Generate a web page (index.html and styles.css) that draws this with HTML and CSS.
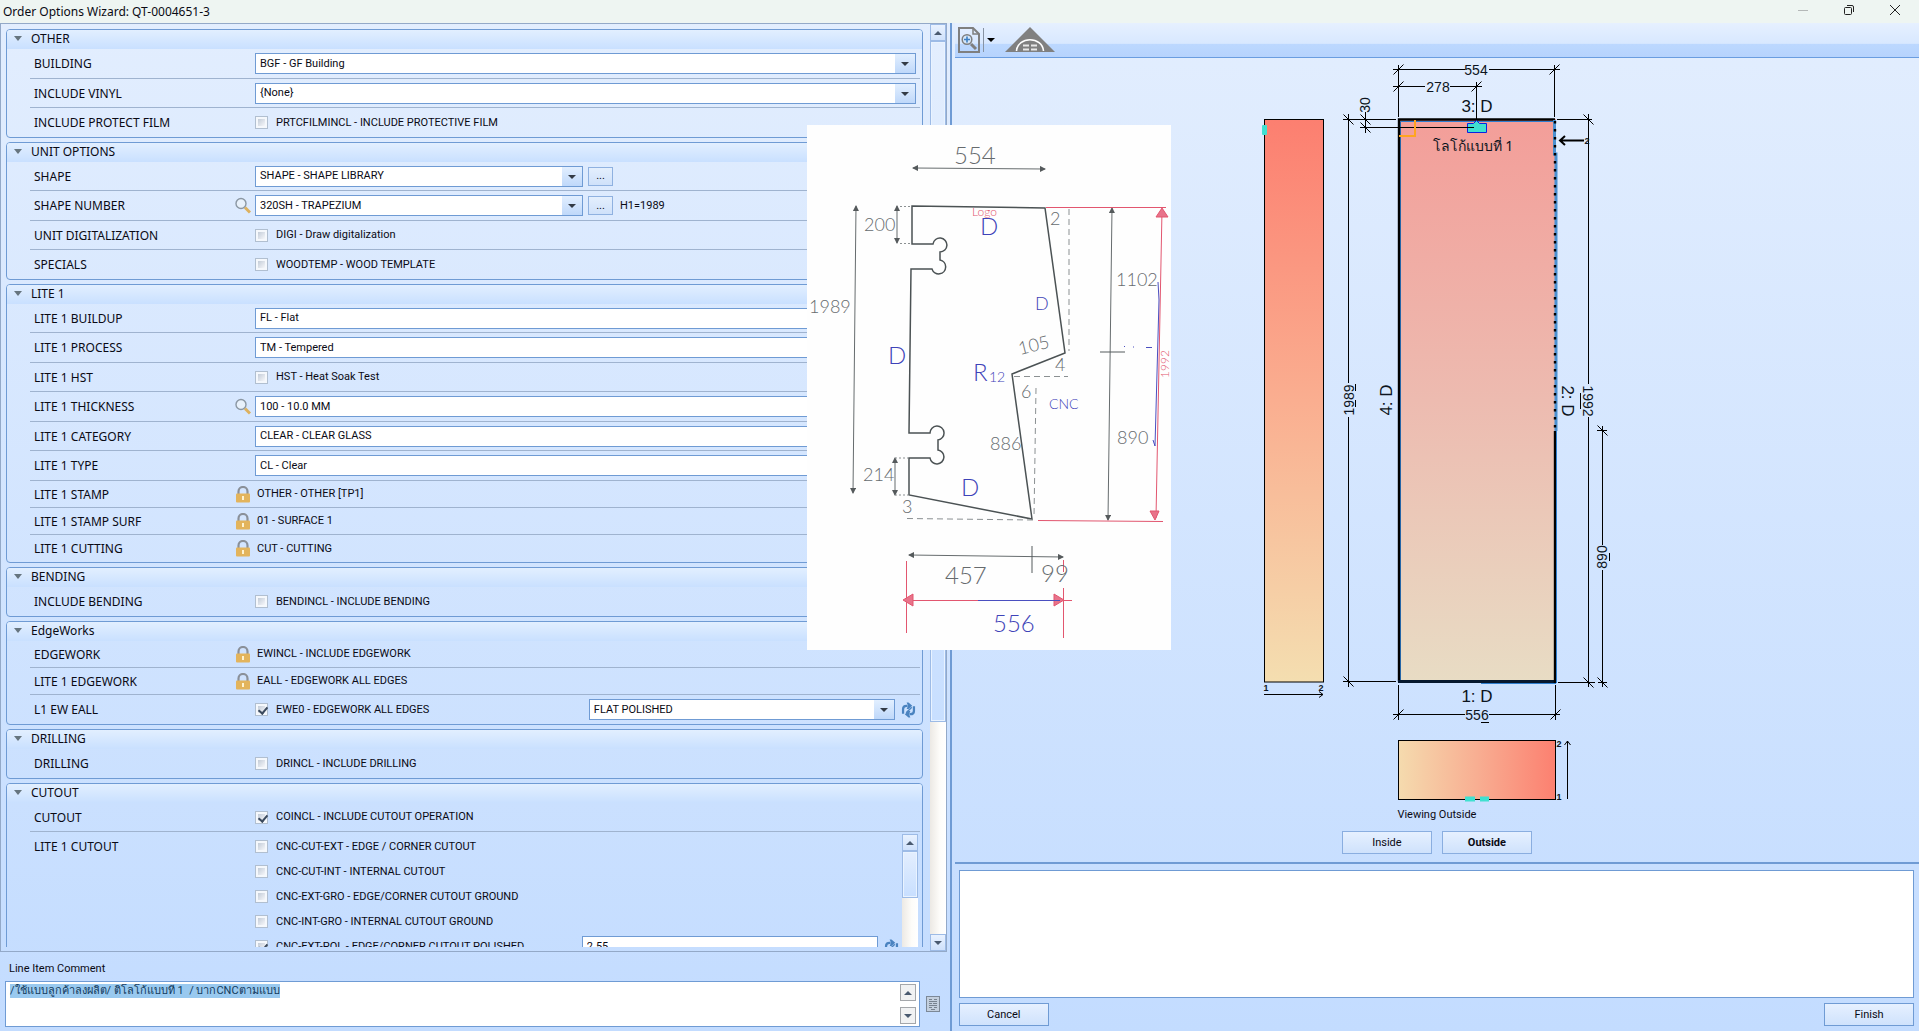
FILE: index.html
```html
<!DOCTYPE html>
<html lang="en">
<head>
  <meta charset="UTF-8">
  <meta name="viewport" content="width=device-width, initial-scale=1.0">
  <title>Order Options Wizard: QT-0004651-3</title>
  <link rel="stylesheet" href="styles.css">
</head>
<body>
  <!-- shared icons -->
  <svg class="defs" aria-hidden="true">
    <symbol id="lock" viewBox="0 0 14 17">
      <path d="M2.500 8V5.500a4.500 4.500 0 0 1 9 0V8" fill="none" stroke="#8a9099" stroke-width="2.200"/>
      <rect x="0" y="7.500" width="14" height="9" rx="1" fill="#e3b45c"/>
      <path d="M6 10h2v4H6z" fill="#fff3d0"/>
    </symbol>
    <symbol id="search" viewBox="0 0 16 16">
      <circle cx="6" cy="6" r="5" fill="#e8f1fb" stroke="#8b97a3" stroke-width="1.400"/>
      <path d="M10 10l5 5" stroke="#ddb15e" stroke-width="3"/>
    </symbol>
    <symbol id="refresh" viewBox="0 0 16 16">
      <path d="M2.200 12V7Q2.200 3.500 6 3.500H7M13.800 4V9Q13.800 12.500 10 12.500H9" fill="none" stroke="#4a83c0" stroke-width="2.400"/>
      <path d="M6 0h2l4 3.500L8 7H6l1.500-3.500zM10 9H8l-4 3.500L8 16h2l-1.500-3.500z" fill="#4a83c0"/>
      <path d="M5.500 11l6-6" stroke="#4a83c0" stroke-width="1.500"/>
    </symbol>
  </svg>

  <header class="titlebar">
    <h1>Order Options Wizard: QT-0004651-3</h1>
    <div class="window-buttons">
      <button aria-label="Minimize"><svg width="12" height="12"><path d="M1 6.500h10" stroke="#b4b8b8"/></svg></button>
      <button aria-label="Restore"><svg width="12" height="12" fill="none" stroke="#222"><rect x="1.500" y="3.500" width="7" height="7" rx="1"/><path d="M4 1.500h5q1.500 0 1.500 1.500v5"/></svg></button>
      <button aria-label="Close"><svg width="12" height="12"><path d="M1 1l10 10M11 1L1 11" stroke="#222"/></svg></button>
    </div>
  </header>

  <main class="wizard">
    <section class="left">
      <div class="options">
        <div class="groups">

          <section class="group">
            <h2>OTHER</h2>
            <div class="row tall">
              <label for="building">BUILDING</label>
              <div class="value"><span class="combo"><select id="building"><option>BGF - GF Building</option></select></span></div>
            </div>
            <div class="row">
              <label for="vinyl">INCLUDE VINYL</label>
              <div class="value"><span class="combo"><select id="vinyl"><option>{None}</option></select></span></div>
            </div>
            <div class="row">
              <span class="name">INCLUDE PROTECT FILM</span>
              <div class="value"><label class="check"><input type="checkbox">PRTCFILMINCL - INCLUDE PROTECTIVE FILM</label></div>
            </div>
          </section>

          <section class="group">
            <h2>UNIT OPTIONS</h2>
            <div class="row">
              <label for="shape">SHAPE</label>
              <div class="value"><span class="combo half"><select id="shape"><option>SHAPE - SHAPE LIBRARY</option></select></span><button class="more" aria-label="Browse shape">...</button></div>
            </div>
            <div class="row tall">
              <label for="shape-number">SHAPE NUMBER</label>
              <svg class="icon"><use href="#search"/></svg>
              <div class="value"><span class="combo half"><select id="shape-number"><option>320SH - TRAPEZIUM</option></select></span><button class="more" aria-label="Browse shape number">...</button><span class="note">H1=1989</span></div>
            </div>
            <div class="row">
              <span class="name">UNIT DIGITALIZATION</span>
              <div class="value"><label class="check"><input type="checkbox">DIGI - Draw digitalization</label></div>
            </div>
            <div class="row">
              <span class="name">SPECIALS</span>
              <div class="value"><label class="check"><input type="checkbox">WOODTEMP - WOOD TEMPLATE</label></div>
            </div>
          </section>

          <section class="group">
            <h2>LITE 1</h2>
            <div class="row">
              <label for="buildup">LITE 1 BUILDUP</label>
              <div class="value"><span class="combo"><select id="buildup"><option>FL - Flat</option></select></span></div>
            </div>
            <div class="row tall">
              <label for="process">LITE 1 PROCESS</label>
              <div class="value"><span class="combo"><select id="process"><option>TM - Tempered</option></select></span></div>
            </div>
            <div class="row">
              <span class="name">LITE 1 HST</span>
              <div class="value"><label class="check"><input type="checkbox">HST - Heat Soak Test</label></div>
            </div>
            <div class="row tall">
              <label for="thickness">LITE 1 THICKNESS</label>
              <svg class="icon"><use href="#search"/></svg>
              <div class="value"><span class="combo"><select id="thickness"><option>100 - 10.0 MM</option></select></span></div>
            </div>
            <div class="row">
              <label for="category">LITE 1 CATEGORY</label>
              <div class="value"><span class="combo"><select id="category"><option>CLEAR - CLEAR GLASS</option></select></span></div>
            </div>
            <div class="row tall">
              <label for="type">LITE 1 TYPE</label>
              <div class="value"><span class="combo"><select id="type"><option>CL - Clear</option></select></span></div>
            </div>
            <div class="row locked">
              <span class="name">LITE 1 STAMP</span>
              <svg class="icon"><use href="#lock"/></svg>
              <div class="value">OTHER - OTHER [TP1]</div>
            </div>
            <div class="row locked">
              <span class="name">LITE 1 STAMP SURF</span>
              <svg class="icon"><use href="#lock"/></svg>
              <div class="value">01 - SURFACE 1</div>
            </div>
            <div class="row locked">
              <span class="name">LITE 1 CUTTING</span>
              <svg class="icon"><use href="#lock"/></svg>
              <div class="value">CUT - CUTTING</div>
            </div>
          </section>

          <section class="group">
            <h2>BENDING</h2>
            <div class="row">
              <span class="name">INCLUDE BENDING</span>
              <div class="value"><label class="check"><input type="checkbox">BENDINCL - INCLUDE BENDING</label></div>
            </div>
          </section>

          <section class="group">
            <h2>EdgeWorks</h2>
            <div class="row locked">
              <span class="name">EDGEWORK</span>
              <svg class="icon"><use href="#lock"/></svg>
              <div class="value">EWINCL - INCLUDE EDGEWORK</div>
            </div>
            <div class="row locked">
              <span class="name">LITE 1 EDGEWORK</span>
              <svg class="icon"><use href="#lock"/></svg>
              <div class="value">EALL - EDGEWORK ALL EDGES</div>
            </div>
            <div class="row">
              <span class="name">L1 EW EALL</span>
              <div class="value">
                <label class="check"><input type="checkbox" checked>EWE0 - EDGEWORK ALL EDGES</label>
                <span class="combo edge"><select aria-label="Edge finish"><option>FLAT POLISHED</option></select></span>
                <button class="refresh" aria-label="Refresh edge finish"><svg class="icon"><use href="#refresh"/></svg></button>
              </div>
            </div>
          </section>

          <section class="group">
            <h2>DRILLING</h2>
            <div class="row">
              <span class="name">DRILLING</span>
              <div class="value"><label class="check"><input type="checkbox">DRINCL - INCLUDE DRILLING</label></div>
            </div>
          </section>

          <section class="group">
            <h2>CUTOUT</h2>
            <div class="row">
              <span class="name">CUTOUT</span>
              <div class="value"><label class="check"><input type="checkbox" checked>COINCL - INCLUDE CUTOUT OPERATION</label></div>
            </div>
            <div class="row list">
              <span class="name">LITE 1 CUTOUT</span>
              <div class="cutouts">
                <label class="check"><input type="checkbox">CNC-CUT-EXT - EDGE / CORNER CUTOUT</label>
                <label class="check"><input type="checkbox">CNC-CUT-INT - INTERNAL CUTOUT</label>
                <label class="check"><input type="checkbox">CNC-EXT-GRO - EDGE/CORNER CUTOUT GROUND</label>
                <label class="check"><input type="checkbox">CNC-INT-GRO - INTERNAL CUTOUT GROUND</label>
                <div class="cutout">
                  <label class="check"><input type="checkbox" checked>CNC-EXT-POL - EDGE/CORNER CUTOUT POLISHED</label>
                  <input class="amount" type="text" value="2.55" aria-label="Polished cutout length">
                  <button class="refresh" aria-label="Refresh cutout length"><svg class="icon"><use href="#refresh"/></svg></button>
                </div>
              </div>
              <div class="scrollbar">
                <button class="arrow up" aria-label="Scroll cutouts up"></button>
                <span class="thumb short"></span>
              </div>
            </div>
          </section>

        </div>
        <div class="scrollbar">
          <button class="arrow up" aria-label="Scroll up"></button>
          <span class="thumb"></span>
          <span class="track"></span>
          <button class="arrow down" aria-label="Scroll down"></button>
        </div>
      </div>

      <div class="comment">
        <label for="comment">Line Item Comment</label>
        <div class="comment-row">
          <div class="comment-box">
            <textarea id="comment" spellcheck="false">/ใช้แบบลูกค้าลงผลิต/ ติโลโก้แบบที่ 1  / บากCNCตามแบบ</textarea>
            <div class="spin">
              <button class="arrow up grey" aria-label="Previous line"></button>
              <button class="arrow down grey" aria-label="Next line"></button>
            </div>
          </div>
          <button class="notes" aria-label="Comment templates">
            <svg width="14" height="16"><rect x=".5" y=".5" width="13" height="15" fill="#c3cfde" stroke="#7c8897"/><path d="M3 3.500h3M8 3.500h3M3 5.500h8M3 7.500h3M7 7.500h4M3 9.500h8M3 11.500h3M8 11.500h3M5 13.500h4" stroke="#77828f"/></svg>
          </button>
        </div>
      </div>
    </section>

    <section class="right">
      <div class="toolbar">
        <button aria-label="Zoom page">
          <svg width="22" height="26" fill="none" stroke="#7f7f7f"><path d="M1 1h14l6 6v18H1z" stroke-width="2"/><path d="M15 1v6h6" stroke-width="1.500"/><circle cx="9" cy="12.500" r="4.800" fill="#d6e8fb" stroke-width="1.500"/><path d="M9 9.500v6M6 12.500h6" stroke="#3d7fc4" stroke-width="1.600"/><path d="M13 17l5 5" stroke-width="3"/></svg>
        </button>
        <button class="drop" aria-label="Zoom options"></button>
        <button aria-label="Shape view">
          <svg width="50" height="26"><path d="M25 0l25 25H0z" fill="#808080"/><path d="M11.500 24c1-15 26-15 27 0" fill="none" stroke="#fff" stroke-width="1.600"/><path d="M18 18.500h6M26 18.500h6M18 22.500h6M26 22.500h6" stroke="#e8e8e8" stroke-width="1.800"/></svg>
        </button>
      </div>

      <div class="stage">
        <!-- glass elevation with front, side and bottom views -->
        <svg class="drawing" viewBox="1246 62 380 742" width="380" height="742">
          <defs>
            <linearGradient id="side" x1="0" y1="0" x2="0" y2="1"><stop offset="0" stop-color="#fc7f70"/><stop offset=".5" stop-color="#faae90"/><stop offset="1" stop-color="#f4deb0"/></linearGradient>
            <linearGradient id="front" x1="0" y1="0" x2="0" y2="1"><stop offset="0" stop-color="#f39e99"/><stop offset=".5" stop-color="#edbbb0"/><stop offset="1" stop-color="#e8dcc4"/></linearGradient>
            <linearGradient id="bottom"><stop offset="0" stop-color="#f5dbae"/><stop offset=".5" stop-color="#f8ae92"/><stop offset="1" stop-color="#fc8070"/></linearGradient>
          </defs>

          <rect x="1263.500" y="119.500" width="59" height="562.500" fill="url(#side)" stroke="#000"/>
          <rect x="1261" y="125" width="5" height="10" rx="1" fill="#40e0d0"/>
          <g class="dim"><path d="M1263 694.500h59m-4-3l4 3l-4 3"/></g>
          <text class="tiny" x="1265" y="691">1</text>
          <text class="tiny" x="1320" y="691">2</text>

          <rect x="1397" y="119" width="158" height="563" fill="url(#front)"/>
          <path d="M1399.500 681V121.500H1554" fill="none" stroke="#2f7fd0"/>
          <path d="M1398 681.500V119.500H1554" fill="none" stroke="#000" stroke-width="2.400"/>
          <path d="M1397 681.500H1555" stroke="#06182e" stroke-width="3"/>
          <path d="M1553.500 120v34h1.500v277" fill="none" stroke="#4a90d0" stroke-width="3"/>
          <path d="M1554 121v310" stroke="#000" stroke-width="2.400" stroke-dasharray="2.400 5.600"/>
          <path d="M1554 431v252" stroke="#000" stroke-width="2.400"/>
          <path d="M1555.500 431v252M1480 683.500h75" stroke="#2f7fd0"/>

          <g class="dim">
            <path d="M1397.500 65v52M1553.500 65v52M1392 69.500h72M1488 69.500h71M1392 86.500h32M1449 86.500h32M1475.500 82v42"/>
            <path d="M1392.500 74.500l10-10M1548.500 74.500l10-10M1392.500 91.500l10-10M1470.500 91.500l10-10"/>
            <path d="M1364.500 112v21M1359 127.500h114M1342 119.500h53M1342 681.500h53M1347.500 114v269M1347.500 417v270"/>
            <path d="M1359.500 114.500l10 10M1359.500 122.500l10 10M1342.500 114.500l10 10M1342.500 676.500l10 10"/>
            <path d="M1556 119.500h35M1557 682.500h37M1597 682.500h9M1587.500 114v270M1587.500 417v270M1601.500 426v119M1601.500 570v117M1596 430.500h10"/>
            <path d="M1582.500 114.500l10 10M1582.500 677.500l10 10M1596.500 425.500l10 10M1596.500 677.500l10 10"/>
            <path d="M1397.500 685v35M1554.500 685v35M1392 714.500h72M1488 714.500h71M1392.500 719.500l10-10M1549.500 719.500l10-10M1480 722.500h8"/>
            <path d="M1354.500 384v7M1354.500 400v7M1579.500 393v16M1608.500 553v8"/>
          </g>
          <path d="M1564 136l-5 4.500l5 4.500M1559 140.500h24" fill="none" stroke="#000" stroke-width="2"/>
          <text class="tiny" x="1586" y="144">2</text>

          <path d="M1414 120v16h-16" fill="none" stroke="#ffa51f" stroke-width="2"/>
          <path d="M1466.500 123.500h6l3-3l3 3h7v9h-19z" fill="#40e0d0" stroke="#0a22e0"/>
          <path d="M1466 127.500h7" stroke="#000"/>

          <text class="size" x="1475" y="75">554</text>
          <text class="size" x="1437" y="92">278</text>
          <text class="size" x="1476" y="720">556</text>
          <text class="size" transform="translate(1369 105) rotate(-90)">30</text>
          <text class="size" transform="translate(1353 400) rotate(-90)">1989</text>
          <text class="size" transform="translate(1582 401) rotate(90)">1992</text>
          <text class="size" transform="translate(1606 557) rotate(-90)">890</text>
          <text class="edge-name" x="1476" y="112">3: D</text>
          <text class="edge-name" x="1476" y="702">1: D</text>
          <text class="edge-name" transform="translate(1391 400) rotate(-90)">4: D</text>
          <text class="edge-name" transform="translate(1561 401) rotate(90)">2: D</text>
          <text class="logo" x="1472" y="151">โลโก้แบบที่ 1</text>

          <rect x="1397.500" y="740.500" width="157" height="59" fill="url(#bottom)" stroke="#000"/>
          <path d="M1464 796.500h10v5h-10zM1479 796.500h9v5h-9z" fill="#40e0d0"/>
          <g class="dim"><path d="M1566.500 799v-58m-3 4l3-4l3 4"/></g>
          <text class="tiny" x="1558" y="747">2</text>
          <text class="tiny" x="1558" y="800">1</text>
        </svg>
        <p>Viewing Outside</p>
        <div class="sides">
          <button class="btn">Inside</button>
          <button class="btn active">Outside</button>
        </div>
      </div>

      <div class="bottom">
        <textarea aria-label="Messages" readonly></textarea>
        <div class="actions">
          <button class="btn">Cancel</button>
          <button class="btn">Finish</button>
        </div>
      </div>
    </section>
  </main>

  <!-- scanned customer sketch, floats above the wizard -->
  <svg class="sketch" viewBox="807 125 364 525">
    <defs>
      <marker id="tip" viewBox="0 0 6 6" refX="5" refY="3" markerWidth="6" markerHeight="6" markerUnits="userSpaceOnUse" orient="auto-start-reverse"><path class="tip" d="M0 0l6 3l-6 3z"/></marker>
    </defs>
    <g class="outline">
      <path d="M912 206L1045 208L1065 353L1012 374L1032 519L909 495V458H930A7 7 0 1 0 938 450V440A7 7 0 1 0 930 433H909L911 269H932A7 7 0 1 0 940 260V252A7 7 0 1 0 933 244H912Z"/>
    </g>
    <g class="arrows">
      <path d="M913 168L1045 169"/>
      <path d="M856 206L853 493"/>
      <path d="M897 206V243"/>
      <path d="M895 458V495"/>
      <path d="M1112 208L1108 520"/>
      <path d="M909 555L1063 557"/>
    </g>
    <path class="pencil" d="M1032 546v27M1100 352h25"/>
    <path class="dashes" d="M1069 209V351M1014 376.500H1068M1036 388L1034 518M907 518.500L1033 520"/>
    <path class="dots" d="M900 206.500h12M900 243.500h12M895 458h13M895 495h13"/>
    <g class="red">
      <path d="M1046 207.500H1166M1162 210L1156 518M1038 520.500L1163 521.500M906.500 561V633M1063.500 560v12M1063.500 588V638M905 600.500H1072"/>
      <path class="fill" d="M1162 208l-6 9h12zM1155 520l-5-9h9zM903 600l10-6v12zM1064 600l-10-6v12z"/>
    </g>
    <path class="pen" d="M1158 282L1159 300L1155 446L1153 440M978 600.500h82M1146 347.500h6M1124 346.500h1M1133 347h1"/>
    <g class="note-grey">
      <text x="954" y="164">554</text>
      <text class="mid" x="864" y="231">200</text>
      <text class="mid" x="809" y="313">1989</text>
      <text class="mid" x="1050" y="225">2</text>
      <text class="mid" x="1116" y="286">1102</text>
      <text class="mid" transform="translate(1020 355) rotate(-14)">105</text>
      <text class="mid" x="1055" y="371">4</text>
      <text class="mid" x="1021" y="398">6</text>
      <text class="mid" x="990" y="450">886</text>
      <text class="mid" x="1117" y="444">890</text>
      <text class="mid" x="863" y="481">214</text>
      <text class="mid" x="902" y="513">3</text>
      <text x="945" y="584">457</text>
      <text x="1041" y="582">99</text>
    </g>
    <g class="note-blue">
      <text x="980" y="235">D</text>
      <text class="mid" x="1035" y="310">D</text>
      <text x="888" y="364">D</text>
      <text x="961" y="496">D</text>
      <text x="973" y="381">R</text>
      <text class="small" x="989" y="382">12</text>
      <text class="small" x="1049" y="409">CNC</text>
      <text x="993" y="632">556</text>
    </g>
    <g class="note-red">
      <text x="972" y="216">Logo</text>
      <text class="small" transform="translate(1169 378) rotate(-90)">1992</text>
    </g>
  </svg>

  <script>
    const comment = document.getElementById("comment");
    comment.focus();
    comment.select();
  </script>
</body>
</html>
```

FILE: styles.css
```css
* { box-sizing: border-box; }
body {
  --line: #6f9bd4;
  --soft-line: #9fb3cf;
  margin: 0;
  height: 100vh;
  display: flex;
  flex-direction: column;
  overflow: hidden;
  position: relative;
  font: 11px/14px Roboto, "Noto Sans", sans-serif;
  color: #0a0a14;
  background: linear-gradient(#e3eefe, #c3dcff);
}
h1, h2, p { margin: 0; font-weight: normal; }
button {
  padding: 0;
  border: 0;
  background: none;
  font: inherit;
  color: inherit;
}
input, select, textarea { margin: 0; font: inherit; color: inherit; }
.defs { position: absolute; width: 0; height: 0; }

/* title bar */
.titlebar {
  flex: none;
  height: 23px;
  display: flex;
  justify-content: space-between;
  align-items: center;
  padding: 0 18px 3px 3px;
  background: #eef5f2;
}
.titlebar h1 { font: 12px/20px "Noto Sans", sans-serif; padding-top: 3px; }
.window-buttons { display: flex; gap: 34px; }
.window-buttons svg { display: block; }

.wizard { flex: 1; min-height: 0; display: flex; }
.left {
  width: 49.6%;
  display: flex;
  flex-direction: column;
  border-right: 2px solid var(--line);
}
.right { flex: 1; min-width: 0; display: flex; flex-direction: column; padding-left: 3px; }

/* option groups */
.options {
  flex: 1;
  min-height: 0;
  display: flex;
  margin-right: 3px;
  border: 1px solid #93a9c8;
}
.groups { flex: 1; overflow: hidden; margin: 5px 7px 4px 5px; }
.group {
  margin-bottom: 4px;
  border: 1px solid var(--line);
  border-radius: 4px;
}
.group h2 {
  height: 19px;
  display: flex;
  align-items: center;
  gap: 9px;
  padding: 0 0 2px 7px;
  font: 12px/17px "Noto Sans", sans-serif;
  background: linear-gradient(#e2efff, #c9e0ff);
  border-radius: 3px 3px 0 0;
}
.group h2::before {
  content: "";
  border: 4px solid transparent;
  border-top: 5px solid #66757f;
  border-bottom: 0;
}
.row {
  height: 29px;
  display: grid;
  grid-template-columns: 201px 20px 1fr;
  align-items: center;
  margin: 0 2px 0 23px;
  padding-left: 4px;
  border-bottom: 1px solid var(--soft-line);
}
.row:last-child { border-bottom: 0; }
.row.tall { height: 30px; }
.row.locked { height: 27px; }
.row > label, .name { font: 12px/17px "Noto Sans", sans-serif; }
.icon { width: 16px; height: 17px; display: block; }
.value { grid-column: 3; display: flex; align-items: center; padding-right: 4px; }
.locked .value { padding-left: 2px; }
.combo {
  flex: 1;
  display: flex;
  position: relative;
  height: 21px;
  border: 1px solid var(--line);
  background: #fff;
}
.combo.half { flex: none; width: 328px; }
.combo.edge { flex: none; width: 306px; margin-left: auto; }
.combo select {
  flex: 1;
  appearance: none;
  border: 0;
  padding: 0 22px 0 4px;
  background: linear-gradient(#e2efff, #bfd8fa) right / 20px 100% no-repeat;
}
.combo::after {
  content: "";
  position: absolute;
  right: 6px;
  top: 8px;
  border: 4px solid transparent;
  border-top-color: #333b46;
  border-bottom: 0;
}
.more {
  width: 25px;
  height: 19px;
  margin-left: 5px;
  border: 1px solid #8fb1e0;
  background: linear-gradient(#e4effd, #cfe1fa);
}
.note { margin-left: 7px; }
.check { display: flex; align-items: center; gap: 8px; white-space: nowrap; }
.check input {
  appearance: none;
  width: 13px;
  height: 13px;
  border: 1px solid #b1bfd0;
  background: linear-gradient(135deg, #c3ccd8, #f6f7fa) content-box, #f5f8fc;
  padding: 2px;
}
.check input:checked::before {
  content: "";
  display: block;
  width: 4px;
  height: 7px;
  margin: -1px 0 0 2px;
  border: solid #3b4a5e;
  border-width: 0 2px 2px 0;
  transform: rotate(40deg);
}
.refresh { margin-left: 6px; }
.refresh .icon { width: 15px; height: 16px; }

.row.list {
  height: 200px;
  grid-template-columns: 221px 1fr 16px;
  align-items: start;
  padding-right: 2px;
}
.list .name { padding-top: 6px; }
.cutouts { padding-top: 2px; }
.cutouts > * { height: 25px; }
.cutout { display: flex; align-items: center; padding-right: 3px; }
.amount {
  width: 296px;
  height: 21px;
  margin-left: auto;
  padding: 0 4px;
  border: 1px solid var(--line);
  background: #fff;
}

/* scrollbars */
.scrollbar {
  width: 16px;
  display: flex;
  flex-direction: column;
  background: linear-gradient(90deg, #ece9e4, #fdfcf9 60%, #fff);
}
.list .scrollbar { height: 190px; margin-top: 2px; }
.arrow {
  flex: none;
  height: 17px;
  width: 16px;
  display: grid;
  place-items: center;
  border: 1px solid #9dbbe6;
  background: linear-gradient(#e9f2ff, #cfe1fb);
}
.arrow::before { content: ""; border: 4px solid transparent; }
.arrow.up::before { border-bottom-color: #4a5a70; border-top: 0; }
.arrow.down::before { border-top-color: #4a5a70; border-bottom: 0; }
.arrow.grey { border-color: #a4a7ab; background: #f1f2f3; }
.thumb {
  flex: 3.2;
  border: 1px solid #9dbbe6;
  box-shadow: inset 0 0 0 1px #e9f3ff;
  background: linear-gradient(#e3eefe, #c8dfff);
}
.thumb.short { flex: none; height: 47px; }
.track { flex: 1; }

/* comment */
.comment { padding: 10px 6px 4px 5px; }
.comment label { display: block; padding: 0 0 5px 4px; }
.comment-row { display: flex; align-items: center; gap: 6px; }
.comment-box {
  flex: 1;
  display: flex;
  height: 46px;
  padding: 2px 3px;
  border: 1px solid var(--line);
  background: #fff;
}
.comment textarea {
  flex: 1;
  resize: none;
  border: 0;
  padding: 0 1px;
  outline: 0;
  overflow: hidden;
}
.comment textarea::selection { background: #99c9ef; color: #123a5c; }
.spin { display: flex; flex-direction: column; justify-content: space-between; }
.notes svg { display: block; }
.notes { margin-right: 4px; }

/* preview */
.toolbar {
  flex: none;
  height: 35px;
  display: flex;
  align-items: center;
  padding-left: 3px;
  border-bottom: 1px solid #6a9de0;
  background: linear-gradient(#e6f0ff, #d8e8ff 60%, #bcd8ff 62%, #b6d3fd);
}
.toolbar svg { display: block; }
.toolbar .drop {
  height: 24px;
  margin: 0 10px 0 3px;
  padding-left: 3px;
  border-left: 1px solid #8793a3;
}
.drop::before {
  content: "";
  display: block;
  border: 4px solid transparent;
  border-top-color: #000;
  border-bottom: 0;
}
.stage {
  flex: 1;
  min-height: 0;
  display: flex;
  flex-direction: column;
  align-items: center;
  padding-top: 4px;
}
.stage p { margin: 4px 0 9px; }
.drawing text { font-family: "Liberation Sans", Arial, sans-serif; fill: #0c1420; }
.drawing .size { font-size: 14px; text-anchor: middle; }
.drawing .edge-name { font-size: 17px; text-anchor: middle; }
.drawing .tiny { font-size: 9px; font-weight: bold; text-anchor: middle; }
.drawing .logo { font: 14px "Noto Sans", sans-serif; text-anchor: middle; }
.dim { fill: none; stroke: #000; }
.sides { display: flex; gap: 10px; }
.btn {
  width: 90px;
  height: 23px;
  border: 1px solid #8aaee0;
  background: linear-gradient(#e6f0ff, #cfe2fc);
}
.btn.active { font-weight: bold; }
.bottom { padding: 6px 5px 5px 4px; border-top: 2px solid var(--line); }
.bottom textarea {
  display: block;
  width: 100%;
  height: 128px;
  resize: none;
  border: 1px solid var(--line);
  background: #fff;
}
.actions { display: flex; justify-content: space-between; margin-top: 5px; }
.actions .btn { border-color: var(--line); }

/* customer sketch */
.sketch {
  position: absolute;
  left: 807px;
  top: 125px;
  width: 364px;
  height: 525px;
  background: #fefefe;
}
.sketch path { fill: none; }
.sketch .tip { fill: #555a5c; stroke: none; }
.outline path { stroke: #4b5254; stroke-width: 1.5; }
.arrows path { stroke: #666c6e; marker-start: url(#tip); marker-end: url(#tip); }
.pencil { stroke: #555b5d; }
.dashes { stroke: #8b9092; stroke-dasharray: 6 4; }
.dots { stroke: #8b9092; stroke-dasharray: 2 2; }
.red path { stroke: #e2566f; }
.sketch .red .fill { fill: #e8738a; }
.pen { stroke: #4a4fc0; }
.sketch text { font-family: Lato, sans-serif; font-weight: 300; font-size: 24px; }
.sketch .mid { font-size: 18px; }
.sketch .small { font-size: 14px; }
.note-grey { fill: #666b6e; }
.note-blue { fill: #3e43b8; }
.note-red { fill: #e2566f; }
.sketch .note-red text { font-size: 12px; }
```
